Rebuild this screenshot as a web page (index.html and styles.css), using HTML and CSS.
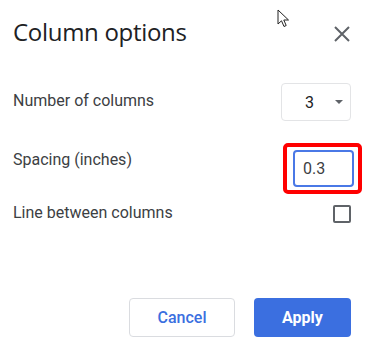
FILE: index.html
```html
<!DOCTYPE html>
<html lang="en">
<head>
    <meta charset="UTF-8">
    <meta name="viewport" content="width=device-width, initial-scale=1.0">
    <title>Column options</title>
    <link rel="stylesheet" href="styles.css">
</head>
<body>
    <div class="dialog">
        <div class="header">
            <h1>Column options</h1>
            <button class="close" aria-label="Close">
                <svg width="16" height="16" viewBox="0 0 16 16">
                    <path d="M1 1 L15 15 M15 1 L1 15" stroke="#5f6368" stroke-width="2" fill="none"/>
                </svg>
            </button>
        </div>

        <div class="row row-cols">
            <label for="cols">Number of columns</label>
            <div class="select" id="cols">
                <span>3</span>
                <span class="caret"></span>
            </div>
        </div>

        <div class="row row-spacing">
            <label for="spacing">Spacing (inches)</label>
            <div class="highlight">
                <input type="text" id="spacing" value="0.3">
            </div>
        </div>

        <div class="row row-line">
            <label for="line">Line between columns</label>
            <span class="checkbox" id="line"></span>
        </div>

        <div class="footer">
            <button class="btn btn-cancel">Cancel</button>
            <button class="btn btn-apply">Apply</button>
        </div>

        <!-- mouse pointer from the capture -->
        <svg class="pointer" width="14" height="20" viewBox="0 0 14 20">
            <path d="M1 1 L1 15 L4.5 11.8 L7 17.5 L9.2 16.5 L6.8 11 L11.5 11 Z" fill="#fff" stroke="#222" stroke-width="1" stroke-linejoin="round"/>
        </svg>
    </div>
</body>
</html>
```

FILE: styles.css
```css
body {
    margin: 0;
    background: #fff;
    font-family: Roboto, "Open Sans", sans-serif;
    color: #3c4043;
}
.dialog {
    position: relative;
    width: 370px;
    height: 351px;
    padding: 0 19px 0 13px;
    box-sizing: border-box;
}
.header {
    display: flex;
    align-items: center;
    justify-content: space-between;
    height: 64px;
}
.header h1 {
    margin: 0;
    font-family: "Open Sans", sans-serif;
    font-weight: 400;
    font-size: 24px;
    line-height: 30px;
    color: #202124;
    letter-spacing: -0.3px;
}
.close {
    border: none;
    background: none;
    padding: 0;
    margin: 3px 1px 0 0;
    width: 16px;
    height: 16px;
    display: flex;
}
.row {
    display: flex;
    align-items: flex-start;
    justify-content: space-between;
}
.row label {
    font-size: 16px;
    line-height: 20px;
    color: #3c4043;
}
.row-cols label {
    margin-top: 27px;
}
.row-spacing label {
    margin-top: 29px;
}
.row-line label {
    margin-top: 9px;
}
.select {
    margin-top: 19px;
    width: 70px;
    height: 38px;
    border: 1px solid #e3e4e6;
    border-radius: 4px;
    box-sizing: border-box;
    display: flex;
    align-items: center;
    padding-left: 23px;
    font-size: 16px;
    color: #202124;
}
.caret {
    margin-left: 21px;
    width: 0;
    height: 0;
    border-left: 4px solid transparent;
    border-right: 4px solid transparent;
    border-top: 4px solid #5f6368;
}
.highlight {
    margin: 22px -11px 0 0;
    border: 4px solid #f00;
    border-radius: 5px;
    padding: 3px 4px 3px 6px;
}
.highlight input {
    display: block;
    width: 61px;
    height: 37px;
    box-sizing: border-box;
    border: 2px solid #4a78e6;
    border-radius: 4px;
    padding: 0 0 0 8px;
    font-family: Roboto, sans-serif;
    font-size: 16px;
    color: #3c4043;
    outline: none;
}
.checkbox {
    margin-top: 11px;
    width: 18px;
    height: 18px;
    box-sizing: border-box;
    border: 2px solid #5f6368;
    border-radius: 2px;
}
.footer {
    display: flex;
    justify-content: flex-end;
    gap: 19px;
    margin-top: 75px;
}
.btn {
    height: 39px;
    border-radius: 4px;
    font-family: Roboto, sans-serif;
    font-size: 16px;
    cursor: pointer;
}
.btn-cancel {
    width: 106px;
    background: #fff;
    color: #3b6fe0;
    border: 1px solid #dadce0;
    font-weight: 500;
}
.btn-apply {
    width: 97px;
    background: #3b6fe0;
    color: #fff;
    border: none;
    font-weight: 700;
}
.pointer {
    position: absolute;
    left: 277px;
    top: 9px;
}
```
